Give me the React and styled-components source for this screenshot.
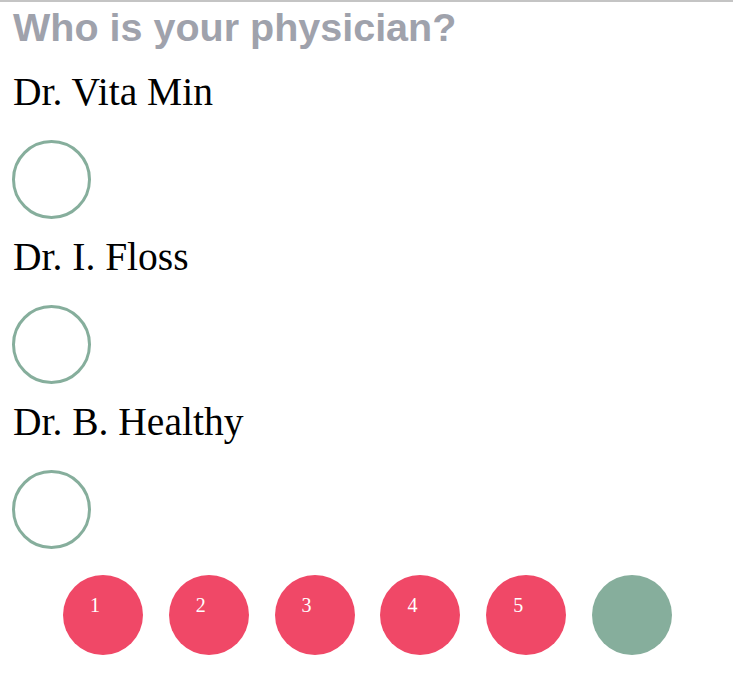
import React from "react";
import styled, { createGlobalStyle } from "styled-components";

const GlobalStyle = createGlobalStyle`
  body {
    margin: 0;
    background: #ffffff;
    font-family: "Liberation Serif", "Times New Roman", serif;
  }
`;

const physicians = ["Dr. Vita Min", "Dr. I. Floss", "Dr. B. Healthy"];
const steps = [1, 2, 3, 4, 5];

function App() {
  return (
    <>
      <GlobalStyle />
      <Wrapper>
        <Header>Who is your physician?</Header>

        <OptionList>
          {physicians.map((name) => (
            <Option key={name}>
              <OptionLabel>{name}</OptionLabel>
              <RadioCircle />
            </Option>
          ))}
        </OptionList>

        <StepsRow>
          {steps.map((n) => (
            <Step key={n}>{n}</Step>
          ))}
          <Step current />
        </StepsRow>
      </Wrapper>
    </>
  );
}

export const Wrapper = styled.div`
  border-top: 2px solid #c4c4c4;
  padding: 0 12px 40px 12px;
`;

export const Header = styled.h1`
  margin: 3px 0 0 1px;
  font-family: "Liberation Sans", Arial, sans-serif;
  font-weight: bold;
  font-size: 39.5px;
  line-height: 45px;
  color: #9fa2ac;
`;

export const OptionList = styled.div`
  display: flex;
  flex-direction: column;
  gap: 16px;
  margin-top: 20px;
`;

export const Option = styled.div`
  display: flex;
  flex-direction: column;
  align-items: flex-start;
`;

export const OptionLabel = styled.div`
  margin-left: 1px;
  font-size: 39.5px;
  line-height: 45px;
  color: #000000;
`;

export const RadioCircle = styled.div`
  box-sizing: border-box;
  width: 79px;
  height: 79px;
  margin-top: 25px;
  border: 3px solid #86ae9c;
  border-radius: 50%;
  background: #ffffff;
`;

export const StepsRow = styled.div`
  display: flex;
  gap: 25.8px;
  margin-top: 26px;
  padding-left: 51px;
`;

export const Step = styled.div`
  box-sizing: border-box;
  width: 80px;
  height: 80px;
  border-radius: 50%;
  padding: 19px 0 0 27px;
  background: ${(p) => (p.current ? "#86ae9c" : "#f04867")};
  color: #ffffff;
  font-size: 20px;
  line-height: 23px;
`;

export default App;
